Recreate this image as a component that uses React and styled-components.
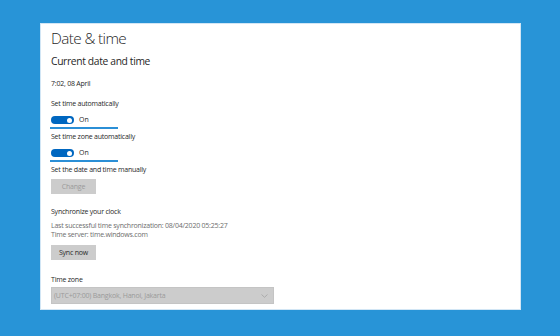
import React from 'react'
import styled, { createGlobalStyle } from 'styled-components'

const GlobalStyle = createGlobalStyle`
    html, body {
        margin: 0;
        padding: 0;
        background: #2894d7;
    }
    body {
        font-family: 'Open Sans', 'Noto Sans', sans-serif;
    }
`
const Page = styled.div`
    width: 560px;
    height: 336px;
    padding: 23px 0 0 40px;
    box-sizing: border-box;
`
const Panel = styled.div`
    width: 481px;
    height: 287px;
    box-sizing: border-box;
    background: #fff;
    border: 1px solid #d2e6f5;
    padding: 4px 10px 0 10px;
    display: flex;
    flex-direction: column;
    align-items: flex-start;
`
const Title = styled.h1`
    margin: 0;
    font-weight: 300;
    font-size: 15.3px;
    line-height: 20px;
    color: #1f1f1f;
    letter-spacing: -0.6px;
`
const Heading = styled.h2`
    margin: 6px 0 0;
    font-weight: 400;
    font-size: 10.3px;
    line-height: 14px;
    color: #1f1f1f;
    letter-spacing: -0.35px;
`
const Text = styled.div`
    margin-top: ${p => p.gap || 0}px;
    font-size: 7px;
    line-height: ${p => p.lh || 10}px;
    color: ${p => (p.muted ? '#6d6d6d' : '#1f1f1f')};
    letter-spacing: -0.22px;
`
const ToggleRow = styled.div`
    display: flex;
    align-items: center;
    gap: 5px;
    margin-top: 6px;
`
const Track = styled.div`
    width: 23px;
    height: 8px;
    border-radius: 5px;
    background: #0067c0;
    position: relative;
`
const Knob = styled.span`
    position: absolute;
    right: 2px;
    top: 1.5px;
    width: 5px;
    height: 5px;
    border-radius: 50%;
    background: #fff;
`
const ToggleLabel = styled.span`
    font-size: 7px;
    line-height: 10px;
    color: #1f1f1f;
`
const Highlight = styled.div`
    width: 68px;
    height: 2px;
    background: #2b8fd6;
    margin-top: 2px;
    margin-left: -1px;
`
const Button = styled.button`
    margin-top: ${p => p.gap || 0}px;
    width: 45px;
    height: 15px;
    padding: 0;
    border: 0;
    background: #cccccc;
    color: ${p => (p.disabled ? '#9a9a9a' : '#2a2a2a')};
    font-family: inherit;
    font-size: 7px;
    letter-spacing: -0.2px;
`
const Select = styled.div`
    margin-top: 2px;
    width: 223px;
    height: 17px;
    box-sizing: border-box;
    background: #cccccc;
    border: 1px solid #c4c4c4;
    display: flex;
    align-items: center;
    justify-content: space-between;
    padding: 0 5px 0 2px;
    color: #9a9a9a;
    font-size: 7px;
    letter-spacing: -0.2px;
`

const Toggle = ({ label }) => (
    <ToggleRow>
        <Track><Knob /></Track>
        <ToggleLabel>{label}</ToggleLabel>
    </ToggleRow>
)

export default function App() {
    return (
        <Page>
            <GlobalStyle />
            <Panel>
                <Title>Date &amp; time</Title>
                <Heading>Current date and time</Heading>
                <Text gap={11}>7:02, 08 April</Text>
                <Text gap={10}>Set time automatically</Text>
                <Toggle label="On" />
                <Highlight />
                <Text gap={3}>Set time zone automatically</Text>
                <Toggle label="On" />
                <Highlight />
                <Text gap={3}>Set the date and time manually</Text>
                <Button gap={4} disabled>Change</Button>
                <Text gap={13}>Synchronize your clock</Text>
                <Text gap={4} lh={9} muted>Last successful time synchronization: 08/04/2020 05:25:27</Text>
                <Text muted>Time server: time.windows.com</Text>
                <Button gap={5}>Sync now</Button>
                <Text gap={15}>Time zone</Text>
                <Select>
                    <span>(UTC+07:00) Bangkok, Hanoi, Jakarta</span>
                    <svg width="7" height="4" viewBox="0 0 7 4">
                        <path d="M0.5 0.5 L3.5 3.3 L6.5 0.5" fill="none" stroke="#a3a3a3" strokeWidth="0.8" />
                    </svg>
                </Select>
            </Panel>
        </Page>
    )
}
